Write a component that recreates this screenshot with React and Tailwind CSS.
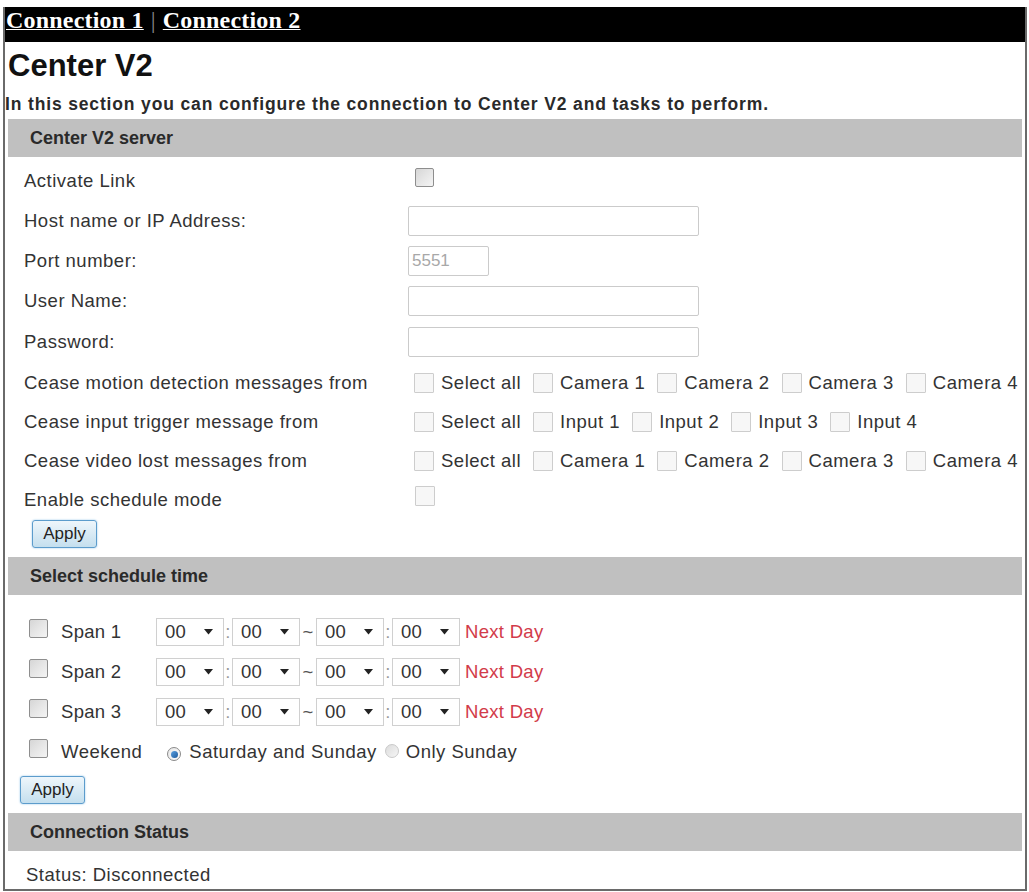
import React from "react";

const sans = { fontFamily: '"Liberation Sans", Arial, sans-serif' };

function Box({ dark }) {
  return dark ? (
    <span className="inline-block w-[19px] h-[19px] rounded-[2px] border border-[#8e8e8e] bg-gradient-to-br from-[#d6d6d6] via-[#e6e6e6] to-[#f4f4f4] shrink-0" />
  ) : (
    <span className="inline-block w-[20px] h-[20px] rounded-[1px] border border-[#cdcdcd] bg-[#f7f7f7] shrink-0" />
  );
}

function Opt({ label }) {
  return (
    <span className="flex items-center shrink-0 whitespace-nowrap">
      <Box />
      <span className="ml-[7px] mr-[12px]">{label}</span>
    </span>
  );
}

function Row({ label, children, h = "h-[40px]" }) {
  return (
    <div className={`flex items-center ${h} whitespace-nowrap`}>
      <div className="w-[400px] pl-[16px] shrink-0">{label}</div>
      <div className="flex items-center tracking-[0.5px] shrink-0">{children}</div>
    </div>
  );
}

function TextInput({ w = "w-[291px]", value = "" }) {
  return (
    <div
      className={`${w} h-[30px] rounded-[2px] border border-[#cbcbcb] bg-white flex items-center pl-[3px] text-[#a8a8a8] text-[17px] tracking-normal`}
    >
      {value}
    </div>
  );
}

function Apply() {
  return (
    <div className="w-[65px] h-[28px] rounded-[3px] border border-[#5c9ccc] bg-gradient-to-b from-[#eef6fb] to-[#c4dfee] shadow-[0_0_2px_#8fc3e8] flex items-center justify-center text-[17px] text-[#222] tracking-normal">
      Apply
    </div>
  );
}

function Sel() {
  return (
    <div className="w-[68px] h-[28px] border border-[#d0d0d0] bg-white flex items-center justify-between pl-[8px] pr-[10px] text-[#333]">
      <span>00</span>
      <svg width="9" height="6" viewBox="0 0 9 6">
        <path d="M0 0 L9 0 L4.5 5.5 Z" fill="#222" />
      </svg>
    </div>
  );
}

function Span({ n }) {
  return (
    <div className="flex items-center h-[40px] whitespace-nowrap">
      <div className="w-[21px] ml-[21px]">
        <Box dark />
      </div>
      <span className="ml-[11px] w-[95px]">Span {n}</span>
      <Sel />
      <span className="w-[8px] text-center text-[#999]">:</span>
      <Sel />
      <span className="w-[16px] text-center text-[#555]">~</span>
      <Sel />
      <span className="w-[8px] text-center text-[#999]">:</span>
      <Sel />
      <span className="ml-[5px] text-[#d23b4a]">Next Day</span>
    </div>
  );
}

function Radio({ on }) {
  return on ? (
    <span className="inline-flex items-center justify-center w-[14px] h-[14px] rounded-full border border-[#8a8a8a] bg-gradient-to-br from-[#e8e8e8] to-[#fafafa] shrink-0">
      <span className="w-[7px] h-[7px] rounded-full bg-gradient-to-br from-[#5aa0e0] to-[#1d5a9c]" />
    </span>
  ) : (
    <span className="inline-block w-[14px] h-[14px] rounded-full border border-[#c9c9c9] bg-gradient-to-br from-[#dcdcdc] to-[#f6f6f6] shrink-0" />
  );
}

function Header({ children }) {
  return (
    <div className="h-[38px] bg-[#c0c0c0] flex items-center pl-[22px] font-bold text-[18px] text-[#2a2a2a] tracking-normal">
      {children}
    </div>
  );
}

export default function App() {
  return (
    <div className="w-[1029px] h-[892px] bg-white pt-[7px] pl-[3px] text-[#333] overflow-hidden" style={sans}>
      <div className="w-[1024px] border-x-2 border-b-2 border-[#6a6a6a]">
        <div
          className="h-[35px] bg-black text-white text-[24px] font-bold leading-[27px] pl-[1px] flex items-start tracking-[0.2px]"
          style={{ fontFamily: '"Liberation Serif", "Times New Roman", serif' }}
        >
          <span className="underline decoration-[1px]">Connection 1</span>
          <span className="font-normal text-[#8a8a8a] mx-[7px]">|</span>
          <span className="underline decoration-[1px]">Connection 2</span>
        </div>
        <div className="px-[3px]">
          <div className="mt-[6px] text-[31px] font-bold leading-[36px] text-[#111]">Center V2</div>
          <div className="mt-[10px] -ml-[3px] text-[17.5px] font-bold leading-[20px] text-[#2a2a2a] tracking-[0.85px]">
            In this section you can configure the connection to Center V2 and tasks to perform.
          </div>
          <div className="mt-[5px]">
            <Header>Center V2 server</Header>
          </div>
          <div className="mt-[4px] text-[18.5px] tracking-[0.5px]">
            <Row label="Activate Link">
              <span className="ml-[7px]">
                <Box dark />
              </span>
            </Row>
            <Row label="Host name or IP Address:">
              <TextInput />
            </Row>
            <Row label="Port number:">
              <TextInput w="w-[81px]" value="5551" />
            </Row>
            <Row label="User Name:">
              <TextInput />
            </Row>
            <Row label="Password:" h="h-[42px]">
              <TextInput />
            </Row>
            <Row label="Cease motion detection messages from" h="h-[39px]">
              <span className="ml-[6px] flex items-center">
                <Opt label="Select all" />
                <Opt label="Camera 1" />
                <Opt label="Camera 2" />
                <Opt label="Camera 3" />
                <Opt label="Camera 4" />
              </span>
            </Row>
            <Row label="Cease input trigger message from" h="h-[39px]">
              <span className="ml-[6px] flex items-center">
                <Opt label="Select all" />
                <Opt label="Input 1" />
                <Opt label="Input 2" />
                <Opt label="Input 3" />
                <Opt label="Input 4" />
              </span>
            </Row>
            <Row label="Cease video lost messages from" h="h-[39px]">
              <span className="ml-[6px] flex items-center">
                <Opt label="Select all" />
                <Opt label="Camera 1" />
                <Opt label="Camera 2" />
                <Opt label="Camera 3" />
                <Opt label="Camera 4" />
              </span>
            </Row>
            <Row label="Enable schedule mode" h="h-[39px]">
              <span className="ml-[7px]">
                <Box />
              </span>
            </Row>
            <div className="mt-[1px] ml-[24px]">
              <Apply />
            </div>
          </div>
          <div className="mt-[9px]">
            <Header>Select schedule time</Header>
          </div>
          <div className="mt-[17px] text-[18.5px] tracking-[0.3px]">
            <Span n={1} />
            <Span n={2} />
            <Span n={3} />
            <div className="flex items-center h-[39px] tracking-[0.5px] whitespace-nowrap">
              <div className="w-[21px] ml-[21px]">
                <Box dark />
              </div>
              <span className="ml-[11px]">Weekend</span>
              <span className="ml-[25px]">
                <Radio on />
              </span>
              <span className="ml-[8px]">Saturday and Sunday</span>
              <span className="ml-[8px]">
                <Radio />
              </span>
              <span className="ml-[7px]">Only Sunday</span>
            </div>
            <div className="mt-[5px] ml-[12px]">
              <Apply />
            </div>
          </div>
          <div className="mt-[9px]">
            <Header>Connection Status</Header>
          </div>
          <div className="pt-[13px] pb-[3px] leading-[22px] pl-[18px] text-[18.5px] tracking-[0.5px]">Status: Disconnected</div>
        </div>
      </div>
    </div>
  );
}
